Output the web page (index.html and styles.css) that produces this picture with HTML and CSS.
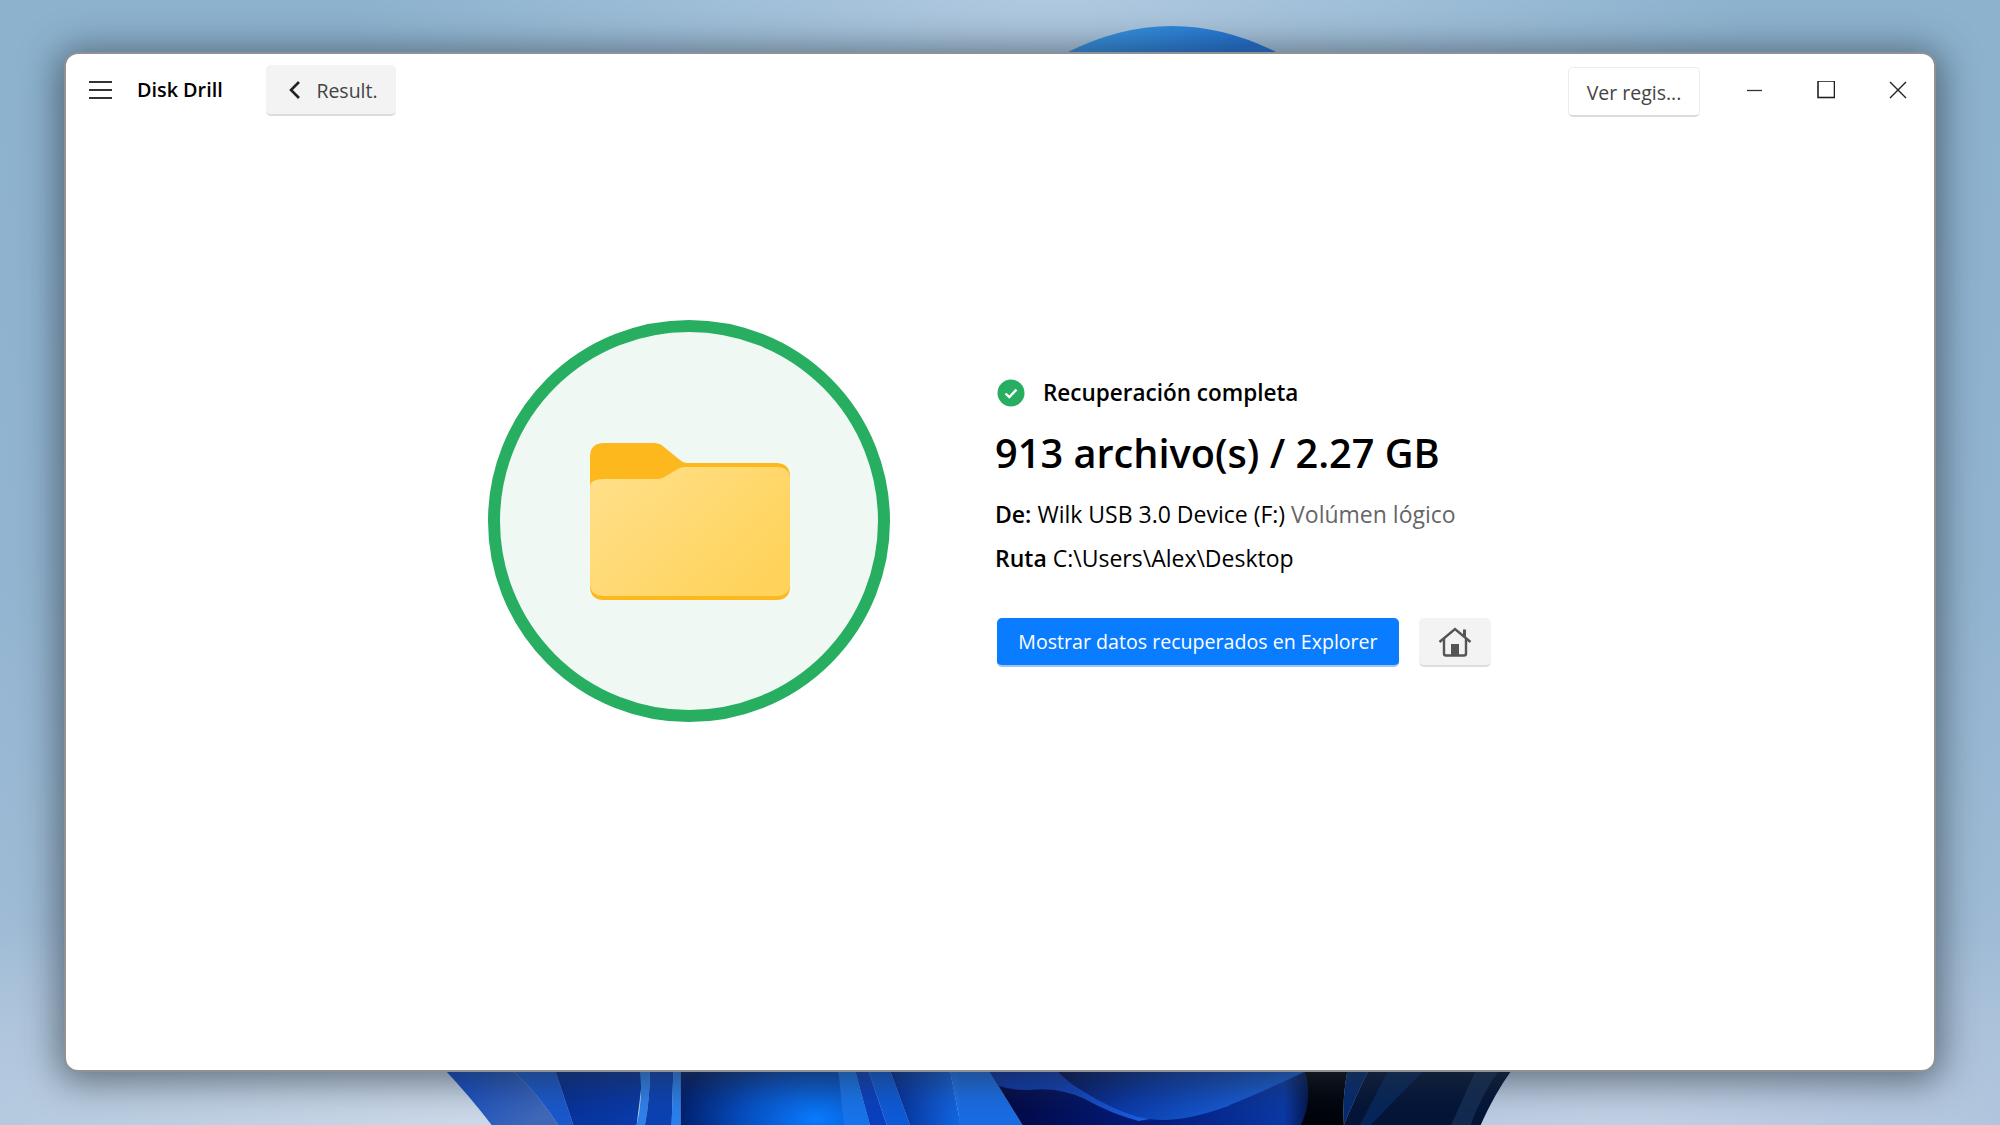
FILE: index.html
```html
<!DOCTYPE html>
<html lang="es">
<head>
<meta charset="utf-8"/>
<meta content="width=device-width, initial-scale=1.0" name="viewport"/>
<title>Disk Drill</title>
<link rel="stylesheet" href="styles.css">
</head>
<body>
<!-- wallpaper bloom, only the top arc and the bottom part show around the window -->
<svg class="wallpaper" viewBox="0 0 2000 1125" aria-hidden="true">
  <defs>
    <linearGradient id="arc" x1="0" y1="0" x2="1" y2="0.4">
      <stop offset="0" stop-color="#3a9be0"/>
      <stop offset="1" stop-color="#1f6ccf"/>
    </linearGradient>
    <linearGradient id="left" x1="0" y1="0" x2="1" y2="0.5">
      <stop offset="0" stop-color="#0a44c4"/>
      <stop offset="1" stop-color="#3f69b8"/>
    </linearGradient>
    <linearGradient id="deep" x1="0" y1="0" x2="1" y2="1">
      <stop offset="0" stop-color="#052a8c"/>
      <stop offset="1" stop-color="#0a3dae"/>
    </linearGradient>
    <radialGradient id="mid" gradientUnits="userSpaceOnUse" cx="1130" cy="160" r="420" gradientTransform="translate(0 64) scale(1 .6)">
      <stop offset="0" stop-color="#0a7cff"/>
      <stop offset="0.5" stop-color="#0650c4"/>
      <stop offset="1" stop-color="#011e6c"/>
    </radialGradient>
    <linearGradient id="fade" x1="0" y1="0" x2="1" y2="0">
      <stop offset="0" stop-color="#052c94"/>
      <stop offset="1" stop-color="#1268e4"/>
    </linearGradient>
    <linearGradient id="swoop" x1="0" y1="0" x2="1" y2="0.3">
      <stop offset="0" stop-color="#010e50"/>
      <stop offset="0.45" stop-color="#0a3aa8"/>
      <stop offset="1" stop-color="#1c66e0"/>
    </linearGradient>
    <linearGradient id="wedge" x1="0" y1="0" x2="1" y2="0.5">
      <stop offset="0" stop-color="#062c9c"/>
      <stop offset="1" stop-color="#1e62e4"/>
    </linearGradient>
    <linearGradient id="under" x1="0" y1="0" x2="1" y2="0">
      <stop offset="0" stop-color="#020740"/>
      <stop offset="0.55" stop-color="#041f84"/>
      <stop offset="0.9" stop-color="#0a3aa6"/>
      <stop offset="1" stop-color="#020a2c"/>
    </linearGradient>
  </defs>
  <path d="M1064 54Q1172 -2 1280 54Z" fill="url(#arc)"/>

  <g transform="translate(440 1065) scale(.3333)">
    <path d="M15 15Q90 95 155 180H355Q290 80 215 15Z" fill="url(#left)"/>
    <path d="M215 15H345L400 180H355Q290 80 215 15Z" fill="#1a58cc"/>
    <path d="M345 15H610Q600 100 590 180H400Z" fill="url(#deep)"/>
    <path d="M610 15H630Q630 100 615 180H590Q610 100 600 21Z" fill="#2f80ec"/>
    <path d="M630 15H700L695 180H615Q630 100 630 15Z" fill="#0b42b4"/>
    <path d="M700 15H722V180H695Z" fill="#2a80ee"/>
    <path d="M722 15H1195L1225 180H722Z" fill="url(#mid)"/>
    <path d="M1195 15H1245L1290 180H1212Z" fill="#1874ec"/>
    <path d="M1245 15H1285L1340 180H1290Z" fill="#0a40c0"/>
    <path d="M1285 15H1350L1410 180H1340Z" fill="#0e5ad8"/>
    <path d="M1350 15H1530L1562 180H1410Z" fill="url(#fade)"/>
    <path d="M1530 15H1562V180Z" fill="#1f70e8"/>
  </g>

  <g transform="translate(960 1065) scale(.3571 .3333)">
    <path d="M-2 15H80L175 180H-2Z" fill="#1a6ce4"/>
    <path d="M80 15H980L1000 180H175Z" fill="url(#under)"/>
    <path d="M80 15H270Q300 50 340 75Q420 130 500 155Q600 175 760 120L500 168Q420 145 350 102Q280 66 200 74Q150 78 108 62Z" fill="url(#wedge)"/>
    <path d="M270 15H975Q850 80 750 122Q600 185 500 155Q420 130 340 75Q300 50 270 15Z" fill="url(#swoop)"/>
    <path d="M965 15H1085Q1070 100 1075 180H955Q990 100 965 15Z" fill="#01040c"/>
    <path d="M1085 15H1145Q1105 100 1075 180Q1070 100 1085 15Z" fill="#052a70"/>
    <path d="M1145 15H1545Q1495 90 1458 180H1075Q1105 100 1145 15Z" fill="#041538"/>
    <path d="M1200 15H1300L1150 180H1120Z" fill="#062558"/>
    <path d="M1445 15H1510Q1460 90 1430 180H1375Z" fill="#122a50"/>
  </g>
</svg>

<div class="window">
  <header class="titlebar">
    <div class="menu-icon"><span></span><span></span><span></span></div>
    <div class="app-name">Disk Drill</div>
    <div class="btn btn-back">
      <svg class="chevron" width="14" height="20" viewBox="0 0 14 20"><path d="M11 2L3 10l8 8" fill="none" stroke="#222" stroke-width="2.600"/></svg>
      <span>Result.</span>
    </div>
    <div class="spacer"></div>
    <div class="btn btn-log">Ver regis...</div>
    <div class="win-controls">
      <svg width="18" height="18" viewBox="0 0 18 18"><path d="M2 9.500h15" stroke="#333" stroke-width="1.300"/></svg>
      <svg width="18" height="18" viewBox="0 0 18 18"><rect x="1" y="0" width="16.500" height="16.500" fill="none" stroke="#222" stroke-width="1.600"/></svg>
      <svg width="18" height="18" viewBox="0 0 18 18"><path d="M1 1l16 16M17 1L1 17" stroke="#222" stroke-width="1.400"/></svg>
    </div>
  </header>

  <main class="content">
    <div class="ring">
      <svg class="folder" width="200" height="157" viewBox="0 0 200 157">
        <defs>
          <linearGradient id="folderFront" x1="0" y1="0" x2="1" y2="0.7">
            <stop offset="0" stop-color="#ffe08c"/>
            <stop offset="1" stop-color="#ffd35a"/>
          </linearGradient>
        </defs>
        <path d="M0 14Q0 0 14 0H64Q70 0 74 4L90 17Q93 20 98 20H186Q200 20 200 34V143Q200 157 186 157H14Q0 157 0 143Z" fill="#fdb81e"/>
        <path d="M0 44Q0 36 14 36H68Q72 36 76 33L86 27Q90 24 96 24H186Q200 24 200 36V140Q200 153 186 153H14Q0 153 0 140Z" fill="url(#folderFront)"/>
      </svg>
    </div>
    <section class="info">
      <div class="status">
        <svg width="28" height="28" viewBox="0 0 28 28"><circle cx="14" cy="14" r="13.500" fill="#27ae60"/><path d="M8.500 14.500l3.800 3.600 7.200-7.400" fill="none" stroke="#fff" stroke-width="2.400"/></svg>
        <span>Recuperación completa</span>
      </div>
      <h1 class="total">913 archivo(s) / 2.27 GB</h1>
      <p class="line"><b>De:</b> Wilk USB 3.0 Device (F:) <span class="muted">Volúmen lógico</span></p>
      <p class="line"><b>Ruta</b> C:\Users\Alex\Desktop</p>
      <div class="actions">
        <div class="btn-primary">Mostrar datos recuperados en Explorer</div>
        <div class="btn btn-home">
          <svg width="34" height="30" viewBox="0 0 34 30">
            <path d="M1.500 15L17 2l15.500 13" fill="none" stroke="#555" stroke-width="2.400"/>
            <path d="M6 12v14.500q0 2 2 2h18q2 0 2-2V12" fill="none" stroke="#555" stroke-width="2.400"/>
            <rect x="13" y="17" width="8" height="11" fill="#555"/>
            <rect x="25" y="2.500" width="3" height="7" fill="#555"/>
          </svg>
        </div>
      </div>
    </section>
  </main>
</div>
</body>
</html>
```
FILE: styles.css
```css
html, body {
  height: 100%;
}
body {
  margin: 0;
  overflow: hidden;
  font-family: "Open Sans", "Noto Sans", sans-serif;
  color: #000;
  background: radial-gradient(ellipse 800px 240px at 480px 1125px, #ccd9e9 0%, rgba(204,217,233,0) 100%),
    radial-gradient(ellipse 600px 240px at 1620px 1125px, #c2d0e5 0%, rgba(194,208,229,0) 100%),
    radial-gradient(ellipse 700px 240px at 1050px 0, #b0c9e0 0%, rgba(176,201,224,0) 100%),
    linear-gradient(180deg, #8cb2ce 0%, #92b4d0 50%, #a6bfd8 100%);
}
.wallpaper {
  position: absolute;
  left: 0;
  top: 0;
  width: 2000px;
  height: 1125px;
}
.window {
  position: absolute;
  left: 66px;
  top: 54px;
  width: 1868px;
  height: 1016px;
  background: #fff;
  border-radius: 12px;
  box-shadow: 0 0 0 2px #8e9296, 0 4px 36px 8px rgba(40,50,60,0.6);
  display: flex;
  flex-direction: column;
}
.titlebar {
  display: flex;
  align-items: center;
  height: 72px;
  padding: 0 26px 0 23px;
  flex: none;
}
.menu-icon {
  width: 23px;
  display: flex;
  flex-direction: column;
  gap: 6px;
}
.menu-icon span {
  display: block;
  height: 2px;
  background: #333;
}
.app-name {
  font-size: 19.800px;
  font-weight: 600;
  margin-left: 25px;
  margin-top: -1px;
  width: 129px;
}
.btn {
  display: flex;
  align-items: center;
  justify-content: center;
  box-sizing: border-box;
  background: #f3f3f3;
  border-radius: 5px;
  border-bottom: 2px solid #dcdcdc;
  color: #444;
  font-size: 19.500px;
}
.btn-back {
  width: 130px;
  height: 51px;
  gap: 14px;
}
.btn-back span {
  padding-top: 2px;
}
.chevron {
  margin-left: 4px;
  margin-top: 2px;
}
.spacer {
  flex: 1;
}
.btn-log {
  width: 132px;
  height: 50px;
  margin-top: 4px;
  margin-left: 1px;
  padding-top: 1px;
  background: #fff;
  border: 1px solid #ececec;
  border-bottom: 2px solid #dcdcdc;
}
.win-controls {
  display: flex;
  align-items: center;
  gap: 54px;
  margin-left: 45px;
  padding-right: 1px;
}
.content {
  display: flex;
  flex: 1;
  padding: 194px 0 0 422px;
}
.ring {
  box-sizing: border-box;
  width: 402px;
  height: 402px;
  flex: none;
  border-radius: 50%;
  border: 12px solid #27ae60;
  background: #f0f8f4;
  display: flex;
  align-items: center;
  justify-content: center;
}
.folder {
  margin-left: 2px;
}
.info {
  margin-left: 105px;
  padding-top: 57px;
}
.status {
  display: flex;
  align-items: center;
  gap: 18px;
  margin-left: 2px;
  font-size: 22.500px;
  font-weight: 600;
}
.total {
  margin: 18px 0 0;
  font-size: 39.700px;
  font-weight: 600;
  line-height: 54px;
}
.line {
  margin: 14px 0 0;
  font-size: 23px;
  line-height: 30px;
}
.total + .line {
  margin-top: 19px;
}
.line b {
  font-weight: 600;
}
.muted {
  color: #666;
}
.actions {
  display: flex;
  align-items: center;
  margin-top: 45px;
  margin-left: 2px;
}
.btn-primary {
  width: 402px;
  height: 47px;
  background: #0a7cff;
  border-radius: 5px;
  border-bottom: 2px solid #9cc4ee;
  color: #fff;
  font-size: 19.600px;
  display: flex;
  align-items: center;
  justify-content: center;
}
.btn-home {
  width: 72px;
  height: 49px;
  margin-left: 20px;
}
```
